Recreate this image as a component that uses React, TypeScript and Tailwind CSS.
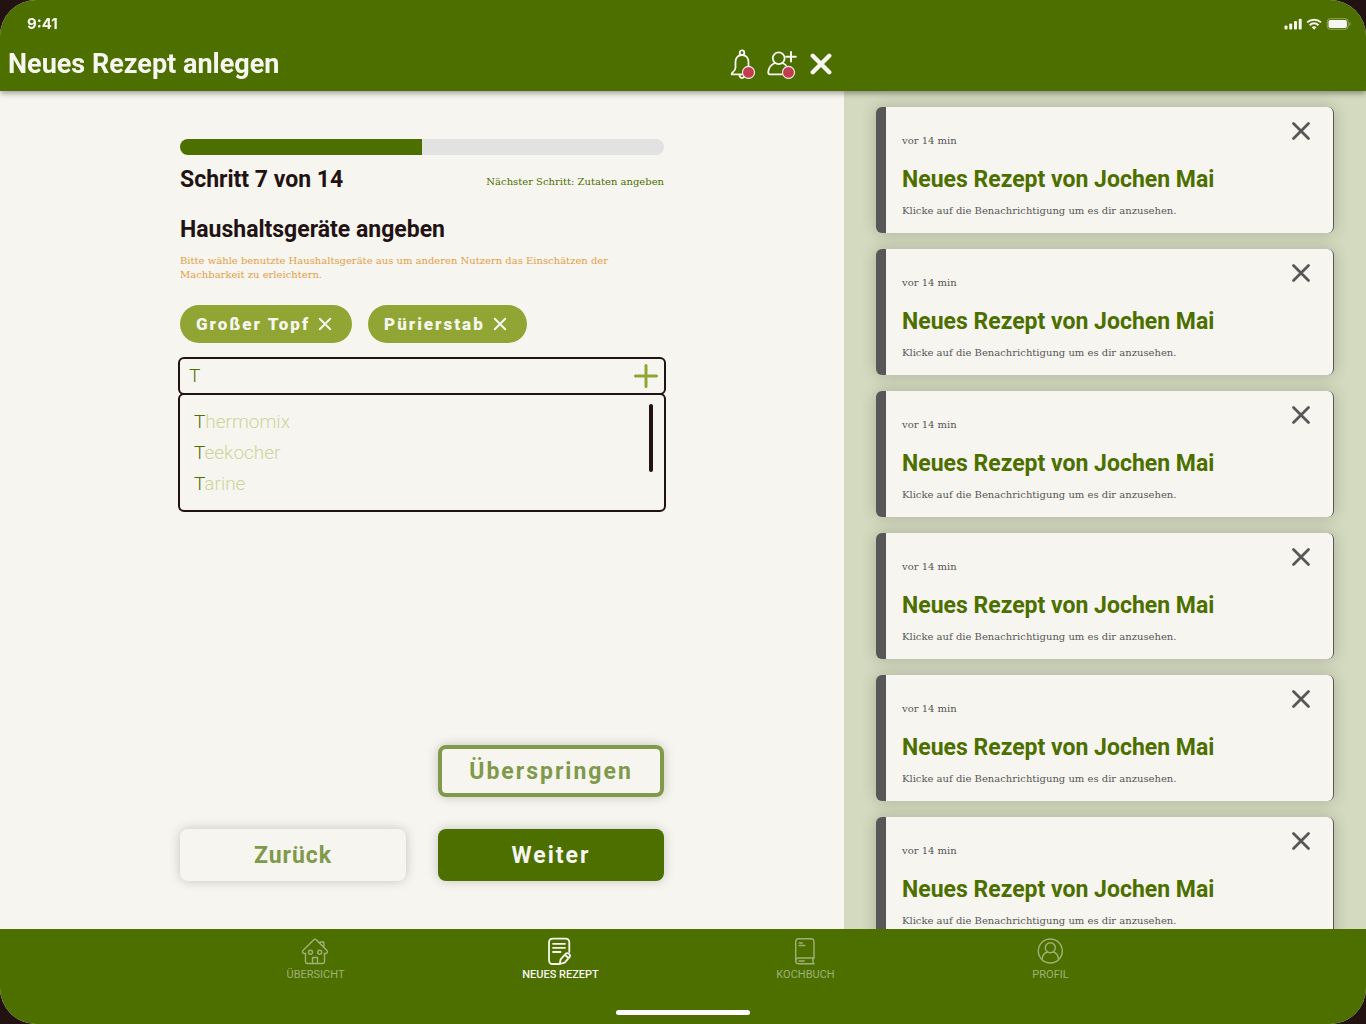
import React, { useState } from "react";

const serif = "font-['Roboto_Slab','DejaVu_Serif',serif]";

function Cross({ className, width }: { className: string; width: number }) {
  return (
    <svg viewBox="0 0 20 20" className={className} fill="none" stroke="currentColor" strokeWidth={width} strokeLinecap="round" aria-hidden="true">
      <path d="M2.500 2.500 17.500 17.500M17.500 2.500 2.500 17.500" />
    </svg>
  );
}

function BellIcon() {
  return (
    <svg viewBox="0 0 26 32" className="h-8 w-[26px]" fill="none" stroke="currentColor" strokeWidth="1.8" strokeLinejoin="round" aria-hidden="true">
      <circle cx="12" cy="4.700" r="2.300" />
      <path d="M12 7C7.800 7 5.500 10 5.500 14v5.500c0 2.200-.8 3.300-2.500 4.500-.9.600-1.300 1.200-1.300 2.400h21.600c0-1.200-.4-1.800-1.300-2.400-1.800-1.200-3.500-2.300-3.500-4.500V14c0-4-2.300-7-6.500-7Z" />
      <path d="M9.500 26.600c0 4.600 5 4.600 5 0" />
      <circle cx="18.500" cy="24.400" r="6" fill="#c43c50" strokeWidth="1.100" />
    </svg>
  );
}

function UserPlusIcon() {
  return (
    <svg viewBox="0 0 32 32" className="size-8" fill="none" stroke="currentColor" strokeWidth="1.800" strokeLinecap="round" strokeLinejoin="round" aria-hidden="true">
      <circle cx="11.700" cy="10.300" r="5.900" />
      <path d="M7.800 15c-3.900 1.600-6.300 5.500-6.600 9.300 0 1.300.6 2 1.800 2h12" />
      <path d="M15.500 15c1.500.7 2.600 1.500 3.500 2.500" />
      <path d="M24 4v9.600M19.200 8.800h9.600" strokeWidth="2" />
      <circle cx="21.500" cy="24.400" r="6" fill="#c43c50" strokeWidth="1.100" />
    </svg>
  );
}

function StatusIcons() {
  return (
    <svg viewBox="0 0 68 14" className="h-3.5 w-[68px]" fill="currentColor" aria-hidden="true">
      <rect x="0.500" y="8.500" width="3" height="4" rx="1" />
      <rect x="5.200" y="6.500" width="3" height="6" rx="1" />
      <rect x="10" y="4" width="3" height="8.500" rx="1" />
      <rect x="14.700" y="1.800" width="3" height="10.700" rx="1" />
      <g fill="none" stroke="currentColor" strokeWidth="2">
        <path d="M23.200 5.400a10 10 0 0 1 13.800 0" />
        <path d="M25.700 8.200a6.200 6.200 0 0 1 8.800 0" />
      </g>
      <path d="M30.100 12.700 27.700 10.300a3.500 3.500 0 0 1 4.800 0Z" />
      <rect x="43.200" y="1.700" width="21" height="10.600" rx="3" fill="none" stroke="currentColor" opacity=".4" />
      <rect x="44.500" y="3" width="18.400" height="8" rx="1.800" />
      <path d="M65.500 5v4c1.500-.5 1.500-3.500 0-4Z" opacity=".5" />
    </svg>
  );
}

function HouseIcon() {
  return (
    <>
      <path d="M4.500 16.500v8.300c0 1.200.6 1.700 1.700 1.700h15.600c1.100 0 1.700-.5 1.700-1.700v-8.300" />
      <path d="M4.500 16.500H3c-1.500-.3-2-1.800-1-2.900L12.800 2.700c.7-.7 1.600-.7 2.300 0L26 13.600c1 1.100.5 2.600-1 2.900h-1.500" />
      <path d="M19 6.500V5h3.800v5.300" />
      <circle cx="9.500" cy="15.300" r="2" />
      <circle cx="18.700" cy="15.300" r="2" />
      <path d="M11.500 26.500v-6h5v6" />
    </>
  );
}

function NoteIcon() {
  return (
    <>
      <path d="M23.300 15V5.500c0-2.500-1.200-3.800-3.800-3.800H6.800C4.200 1.700 3 3 3 5.500v17.700C3 25.700 4.200 27 6.800 27h6.700" />
      <path d="M7 6.800h12M7 10.800h12M7 15h7.500" />
      <path d="m13.700 27 .9-4.600 5.200-5.700c1.700-1.700 5.300 1 3.900 3.200L18.700 25.700 13.700 27Zm5-9.200 3.900 3.200" />
    </>
  );
}

function BookIcon() {
  return (
    <>
      <path d="M23 21V5c0-2.200-1-3.300-3-3.300H7.700C5.700 1.700 4.700 2.800 4.700 5v18.800c0 1.900 1 3 2.800 3H23" />
      <path d="M4.700 23.500c0-1.600 1-2.500 2.800-2.500H23M22 21.500v5M8.200 24h5M8.200 6h3M8.200 8.500h5.500" />
    </>
  );
}

function ProfileIcon() {
  return (
    <>
      <circle cx="14.300" cy="14" r="12" />
      <circle cx="14.300" cy="10.700" r="5" />
      <path d="M6 22.500c.4-4 2.500-6.800 5.500-7.500M17.200 15c3 .7 5 3.500 5.400 7.500" />
    </>
  );
}

const tabs = [
  { label: "ÜBERSICHT", icon: <HouseIcon />, active: false },
  { label: "NEUES REZEPT", icon: <NoteIcon />, active: true },
  { label: "KOCHBUCH", icon: <BookIcon />, active: false },
  { label: "PROFIL", icon: <ProfileIcon />, active: false },
];

const suggestions = ["Thermomix", "Teekocher", "Tarine"];

function Chip({ label }: { label: string }) {
  return (
    <span className="flex h-[38px] items-center gap-2 rounded-full bg-[#90a533] pr-5 pl-4 text-[17px] leading-6 font-black">
      <span className="tracking-[2px]">{label}</span>
      <button type="button" aria-label={`${label} entfernen`}>
        <Cross className="size-3.5" width={2.8} />
      </button>
    </span>
  );
}

function NotificationCard() {
  return (
    <article className="relative shrink-0 rounded-md border-r border-l-10 border-[#575757] bg-[#f6f5ef] px-4 pt-[27px] pb-[15px] shadow-[0_0_16px_rgba(0,0,0,0.2)]">
      <p className={`${serif} text-[10px] leading-[14px] text-[#575757]`}>vor 14 min</p>
      <h2 className="mt-4 text-[23px] leading-8 font-bold text-[#4c6f00]">Neues Rezept von Jochen Mai</h2>
      <p className={`${serif} mt-2 text-[10px] leading-[14px] text-[#575757]`}>Klicke auf die Benachrichtigung um es dir anzusehen.</p>
      <button type="button" aria-label="Benachrichtigung schließen" className="absolute top-3.5 right-[22px] text-[#575757]">
        <Cross className="size-5" width={2.8} />
      </button>
    </article>
  );
}

export default function App() {
  const [query, setQuery] = useState("T");
  const action = "h-[52px] rounded-lg text-[23px] font-bold shadow-[0_0_12px_rgba(0,0,0,0.2)]";

  return (
    <div className="h-screen bg-[#231212] font-[Roboto,sans-serif] text-[#f6f5ef]">
      <div className="flex h-full flex-col overflow-hidden rounded-[36px] bg-[#f6f5ef]">
        <header className="relative z-10 bg-[#4c6f00] pb-2 shadow-[0_2px_6px_rgba(0,0,0,0.4)]">
          <div className="flex items-center justify-between pt-[15px] pr-3.5 pl-[27px]">
            <span className="font-[Inter,sans-serif] text-[15px] leading-[18px] font-bold">9:41</span>
            <StatusIcons />
          </div>
          <div className="mt-3 grid grid-cols-[844fr_522fr]">
            <div className="flex h-[38px] items-center justify-between pr-3 pl-2">
              <h1 className="text-[27px] leading-8 font-bold">Neues Rezept anlegen</h1>
              <div className="flex items-center gap-[11px]">
                <button type="button" aria-label="Benachrichtigungen"><BellIcon /></button>
                <button type="button" aria-label="Freund hinzufügen"><UserPlusIcon /></button>
                <button type="button" aria-label="Schließen"><Cross className="size-[22px]" width={4} /></button>
              </div>
            </div>
          </div>
        </header>

        <div className="grid min-h-0 flex-1 grid-cols-[844fr_522fr]">
          <main className="flex min-h-0 justify-center px-8 py-12">
            <form className="flex w-full max-w-[484px] flex-col text-[#231212]" onSubmit={(e) => e.preventDefault()}>
              <div role="progressbar" aria-valuenow={7} aria-valuemin={0} aria-valuemax={14} aria-label="Fortschritt" className="h-4 overflow-hidden rounded-full bg-[#e2e2e2]">
                <div className="h-full w-1/2 bg-[#4c6f00]" />
              </div>
              <div className="mt-[9px] flex items-center justify-between">
                <h2 className="text-[23px] leading-8 font-bold">Schritt 7 von 14</h2>
                <p className={`${serif} mt-1 text-[10px] leading-[14px] text-[#4c6f00]`}>Nächster Schritt: Zutaten angeben</p>
              </div>
              <h3 className="mt-[18px] text-[23px] leading-8 font-bold">Haushaltsgeräte angeben</h3>
              <p className={`${serif} mt-2 text-[10px] leading-[14px] text-[#e39f48]`}>
                Bitte wähle benutzte Haushaltsgeräte aus um anderen Nutzern das Einschätzen der Machbarkeit zu erleichtern.
              </p>
              <div className="mt-[23px] flex gap-4 text-[#f6f5ef]">
                <Chip label="Großer Topf" />
                <Chip label="Pürierstab" />
              </div>

              <div className="-mx-0.5 mt-3.5">
                <div className="flex h-[38px] items-center rounded-md border-2 border-[#231212] pr-[5px] pl-[9px]">
                  <input
                    aria-label="Haushaltsgerät"
                    value={query}
                    onChange={(e) => setQuery(e.target.value)}
                    className="min-w-0 flex-1 bg-transparent text-[19px] leading-6 font-light text-[#4c6f00] outline-none"
                  />
                  <button type="button" aria-label="Hinzufügen" className="text-[#90a533]">
                    <svg viewBox="0 0 26 26" className="size-[26px]" fill="none" stroke="currentColor" strokeWidth="3" strokeLinecap="round" aria-hidden="true">
                      <path d="M13 2.500v21M2.500 13h21" />
                    </svg>
                  </button>
                </div>
                <div className="-mt-0.5 flex items-start justify-between rounded-md border-2 border-[#231212] pt-[9px] pr-[11px] pb-[11px] pl-3.5">
                  <ul className="pt-0.5 text-[19px] leading-[31px] font-light text-[#ccd69d]">
                    {suggestions.map((s) => (
                      <li key={s}>
                        <button type="button" className="font-light">
                          <span className="text-[#4c6f00]">{s[0]}</span>{s.slice(1)}
                        </button>
                      </li>
                    ))}
                  </ul>
                  <span className="h-[68px] w-1 rounded-full bg-[#231212]" />
                </div>
              </div>

              <div className="mt-auto grid grid-cols-2 gap-8 text-[#80994a]">
                <button type="button" className={`${action} col-start-2 border-4 border-[#80994a] bg-[#f6f5ef] pt-0.5 tracking-[2px]`}>Überspringen</button>
                <button type="button" className={`${action} col-start-1 bg-[#f6f5ef] pt-0.5 tracking-[1px]`}>Zurück</button>
                <button type="submit" className={`${action} bg-[#4c6f00] pt-0.5 tracking-[2px] text-[#f6f5ef]`}>Weiter</button>
              </div>
            </form>
          </main>

          <aside aria-label="Benachrichtigungen" className="flex min-h-0 flex-col gap-4 overflow-y-auto bg-[#d4dabf] px-8 py-4 [scrollbar-width:none]">
            {[1, 2, 3, 4, 5, 6].map((n) => (
              <NotificationCard key={n} />
            ))}
          </aside>
        </div>

        <footer className="flex h-[95px] shrink-0 flex-col items-center justify-between bg-[#4c6f00] pt-2 pb-[9px]">
          <nav className="grid w-full max-w-[980px] grid-cols-4">
            {tabs.map((t) => (
              <a key={t.label} href="#" aria-current={t.active ? "page" : undefined} className={`flex flex-col items-center ${t.active ? "font-medium" : "text-[#a0b177]"}`}>
                <svg viewBox="0 0 29 28" className="h-7 w-[29px]" fill="none" stroke="currentColor" strokeWidth={t.active ? 1.8 : 1.4} strokeLinejoin="round" strokeLinecap="round" aria-hidden="true">
                  {t.icon}
                </svg>
                <span className="mt-[3px] text-[11px] leading-[14px]">{t.label}</span>
              </a>
            ))}
          </nav>
          <div className="h-[5px] w-[134px] rounded-full bg-white" />
        </footer>
      </div>
    </div>
  );
}
